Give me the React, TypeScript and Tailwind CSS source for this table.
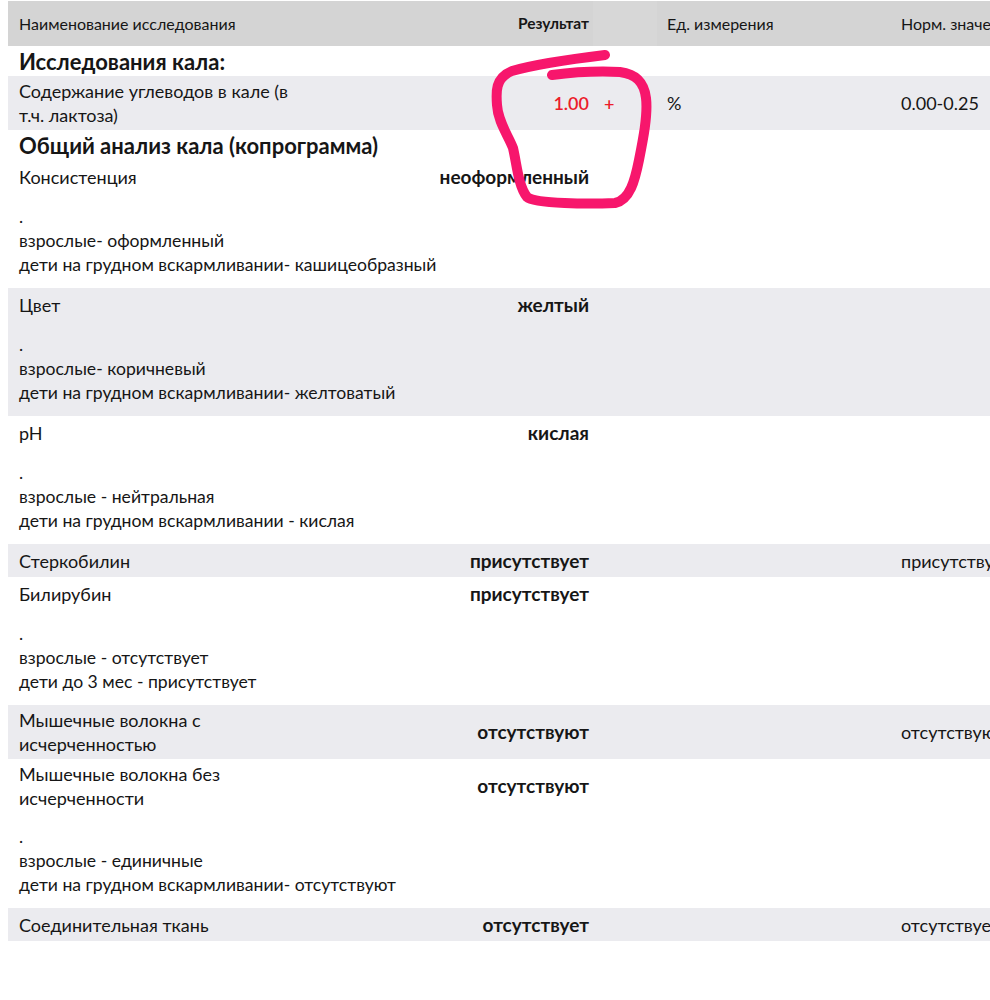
type Row =
  | { kind: "section"; title: string }
  | {
      kind: "row";
      name: string;
      value: string;
      flag?: string;
      unit?: string;
      norm?: string;
      red?: boolean;
      gray?: boolean;
      note?: string[];
    };

const rows: Row[] = [
  { kind: "section", title: "Исследования кала:" },
  {
    kind: "row",
    name: "Содержание углеводов в кале (в т.ч. лактоза)",
    value: "1.00",
    flag: "+",
    unit: "%",
    norm: "0.00-0.25",
    red: true,
    gray: true,
  },
  { kind: "section", title: "Общий анализ кала (копрограмма)" },
  {
    kind: "row",
    name: "Консистенция",
    value: "неоформленный",
    note: [".", "взрослые- оформленный", "дети на грудном вскармливании- кашицеобразный"],
  },
  {
    kind: "row",
    name: "Цвет",
    value: "желтый",
    gray: true,
    note: [".", "взрослые- коричневый", "дети на грудном вскармливании- желтоватый"],
  },
  {
    kind: "row",
    name: "pH",
    value: "кислая",
    note: [".", "взрослые - нейтральная", "дети на грудном вскармливании - кислая"],
  },
  { kind: "row", name: "Стеркобилин", value: "присутствует", norm: "присутствует", gray: true },
  {
    kind: "row",
    name: "Билирубин",
    value: "присутствует",
    note: [".", "взрослые - отсутствует", "дети до 3 мес - присутствует"],
  },
  {
    kind: "row",
    name: "Мышечные волокна с исчерченностью",
    value: "отсутствуют",
    norm: "отсутствуют",
    gray: true,
  },
  {
    kind: "row",
    name: "Мышечные волокна без исчерченности",
    value: "отсутствуют",
    note: [".", "взрослые - единичные", "дети на грудном вскармливании- отсутствуют"],
  },
  { kind: "row", name: "Соединительная ткань", value: "отсутствует", norm: "отсутствует", gray: true },
];

const cols = "grid grid-cols-[302px_283px_64px_233px_220px]";

function Circle() {
  return (
    <svg className="absolute left-0 top-0 pointer-events-none" width="990" height="1000" viewBox="0 0 990 1000">
      <path
        d="M605 55 C 580 58, 540 63, 512 71 C 495 78, 496 92, 497 105 C 498 122, 508 135, 513 148 C 517 165, 518 185, 527 197 C 535 204, 590 204, 615 203 C 630 200, 635 180, 639 160 C 643 140, 648 115, 646 98 C 644 82, 636 74, 620 72 C 600 71, 575 72, 552 75"
        fill="none"
        stroke="#f7166c"
        strokeWidth="10"
        strokeLinecap="round"
        strokeLinejoin="round"
      />
    </svg>
  );
}

export default function App() {
  return (
    <div
      className="relative w-[990px] h-[1000px] overflow-hidden bg-white text-[#161616]"
      style={{ fontFamily: "Lato, 'Open Sans', 'Noto Sans', sans-serif" }}
    >
      <div className="pl-[8px] pt-[1px] w-[1110px]">
        {/* header */}
        <div className={`${cols} h-[45px] items-center bg-[#d4d4d4] text-[16px]`}>
          <div className="pl-[11px]">Наименование исследования</div>
          <div className="pr-[4px] text-right font-bold text-[15.5px]">Результат</div>
          <div className="h-full bg-[#d7d7d7]" />
          <div className="pl-[10px]">Ед. измерения</div>
          <div className="pl-[11px] whitespace-nowrap">Норм. значения</div>
        </div>

        {rows.map((r, i) =>
          r.kind === "section" ? (
            <div key={i} className="pl-[11px] text-[22px] font-bold leading-[28px] pt-[2px]">
              {r.title}
            </div>
          ) : (
            <div key={i} className={r.gray ? "bg-[#ebebef]" : "bg-white"}>
              <div
                className={`${cols} items-center text-[18px] leading-[24px] ${
                  r.name.length > 25 ? "py-[3px]" : "pt-[5px] pb-[4px]"
                }`}
              >
                <div className="pl-[11px] pr-[2px]">{r.name}</div>
                <div
                  className={`pr-[4px] text-right whitespace-nowrap ${
                    r.red ? "text-[#ec1c2b] font-semibold" : "font-bold text-[19px]"
                  }`}
                >
                  {r.value}
                </div>
                <div className={`pl-[11px] ${r.red ? "text-[#ec1c2b] font-semibold" : ""}`}>{r.flag}</div>
                <div className="pl-[10px]">{r.unit}</div>
                <div className="pl-[11px] whitespace-nowrap">{r.norm}</div>
              </div>
              {r.note && (
                <div className="pl-[11px] mt-[12px] pb-[11px] text-[17.6px] leading-[24px]">
                  {r.note.map((l, j) => (
                    <div key={j}>{l}</div>
                  ))}
                </div>
              )}
            </div>
          )
        )}
      </div>
      <Circle />
    </div>
  );
}
